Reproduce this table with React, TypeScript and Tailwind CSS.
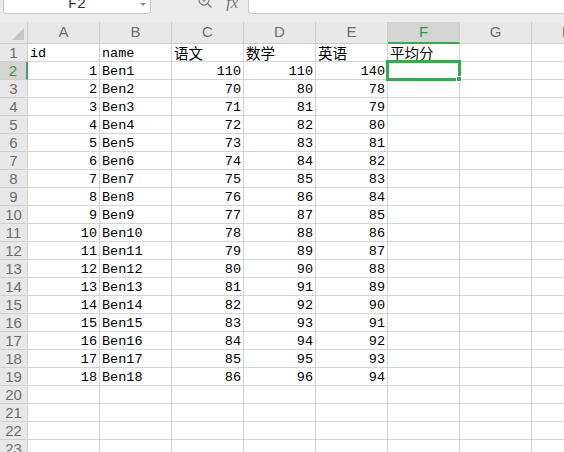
import React from "react";

const cols = ["A", "B", "C", "D", "E", "F", "G", "H"];

type Row = [string, string, string, string, string, string];

const header: Row = ["id", "name", "语文", "数学", "英语", "平均分"];

const rows: Row[] = Array.from({ length: 18 }, (_, i) => {
  const n = i + 1;
  const c = n === 1 ? 110 : 68 + n;
  const d = n === 1 ? 110 : 78 + n;
  const e = n === 1 ? 140 : 76 + n;
  return [String(n), `Ben${n}`, String(c), String(d), String(e), ""];
});

const mono = "font-['Liberation_Mono','Noto_Sans_CJK_SC',monospace]";
const cjk = "font-['Noto_Sans_CJK_SC',sans-serif]";

function HeaderCell({ label, active }: { label: string; active?: boolean }) {
  return (
    <div
      className={`flex h-[22px] items-center justify-center border-r border-b border-[#cfcfcf] font-['Liberation_Sans',sans-serif] text-[15px] ${
        active
          ? "bg-[#d4d4d4] text-[#2e9a44] border-b-2 border-b-[#3ea64f]"
          : "bg-[#e8e8e8] text-[#6d6d6d]"
      }`}
    >
      {label}
    </div>
  );
}

function RowNum({ n, active }: { n: number; active?: boolean }) {
  return (
    <div
      className={`flex h-[18px] items-center justify-center border-b border-[#cfcfcf] font-['Liberation_Sans',sans-serif] text-[15px] leading-none ${
        active
          ? "bg-[#d4d4d4] text-[#2e9a44] border-r-2 border-r-[#3ea64f]"
          : "bg-[#e8e8e8] text-[#6d6d6d] border-r"
      }`}
    >
      {n}
    </div>
  );
}

function Cell({ value, right, isCjk }: { value: string; right?: boolean; isCjk?: boolean }) {
  return (
    <div
      className={`flex h-[18px] whitespace-nowrap border-r border-b border-[#d4d4d4] bg-white px-[2px] text-black ${
        right ? "justify-end" : "justify-start"
      } ${isCjk ? `${cjk} items-center text-[14.5px] leading-[17px]` : `${mono} items-end pb-[1px] text-[13.5px] leading-none`}`}
    >
      {value}
    </div>
  );
}

export default function App() {
  return (
    <div className="h-[452px] w-[564px] overflow-hidden bg-white">
      {/* formula bar */}
      <div className="flex h-[22px] items-start bg-[#ececec]">
        <div className="relative ml-[3px] flex h-[14px] w-[148px] items-start justify-center overflow-hidden rounded-b-[4px] border border-t-0 border-[#c9c9c9] bg-white">
          <span className="-mt-[4px] font-['Liberation_Mono',monospace] text-[15px] leading-[18px] text-[#333]">F2</span>
          <span className="absolute right-[4px] top-[3px] h-0 w-0 border-x-[3px] border-t-[3px] border-x-transparent border-t-[#888]" />
        </div>
        <div className="ml-[45px] -mt-[5px] flex items-start gap-[12px] overflow-hidden">
          <svg width="18" height="15" viewBox="0 0 18 15" fill="none" stroke="#808080" strokeWidth="1.3">
            <circle cx="8" cy="5" r="5" />
            <path d="M11.5 8.5 L15.5 12.5" />
            <path d="M6 5 h4 M8 3 v4" strokeWidth="1" />
          </svg>
          <span className="font-['Liberation_Serif',serif] text-[17px] italic leading-[16px] text-[#7a7a7a]">fx</span>
        </div>
        <div className="ml-[10px] h-[14px] flex-1 rounded-bl-[4px] border border-t-0 border-r-0 border-[#c9c9c9] bg-white" />
      </div>

      {/* grid */}
      <div className="relative w-[604px]">
        <div className="grid grid-cols-[28px_repeat(8,72px)]">
          <div className="relative h-[22px] border-r border-b border-[#cfcfcf] bg-[#e8e8e8]">
            <span className="absolute bottom-[3px] right-[3px] h-0 w-0 border-b-[12px] border-l-[12px] border-b-[#c4c4c4] border-l-transparent" />
          </div>
          {cols.map((c) => (
            <HeaderCell key={c} label={c} active={c === "F"} />
          ))}

          <RowNum n={1} />
          {header.map((h, i) => (
            <Cell key={i} value={h} isCjk={i >= 2} />
          ))}
          <Cell value="" />
          <Cell value="" />

          {rows.map((r, ri) => (
            <React.Fragment key={ri}>
              <RowNum n={ri + 2} active={ri === 0} />
              {r.map((v, ci) => (
                <Cell key={ci} value={v} right={ci !== 1} />
              ))}
              <Cell value="" />
              <Cell value="" />
            </React.Fragment>
          ))}

          {[20, 21, 22, 23].map((n) => (
            <React.Fragment key={n}>
              <RowNum n={n} />
              {cols.map((c) => (
                <Cell key={c} value="" />
              ))}
            </React.Fragment>
          ))}
        </div>

        {/* selection on F2 */}
        <div className="pointer-events-none absolute left-[386px] top-[38px] h-[21px] w-[75px] border-[3px] border-[#3ea64f]">
          <span className="absolute -bottom-[4px] -right-[4px] h-[6px] w-[6px] border border-white bg-[#3ea64f]" />
        </div>
      </div>
    </div>
  );
}
